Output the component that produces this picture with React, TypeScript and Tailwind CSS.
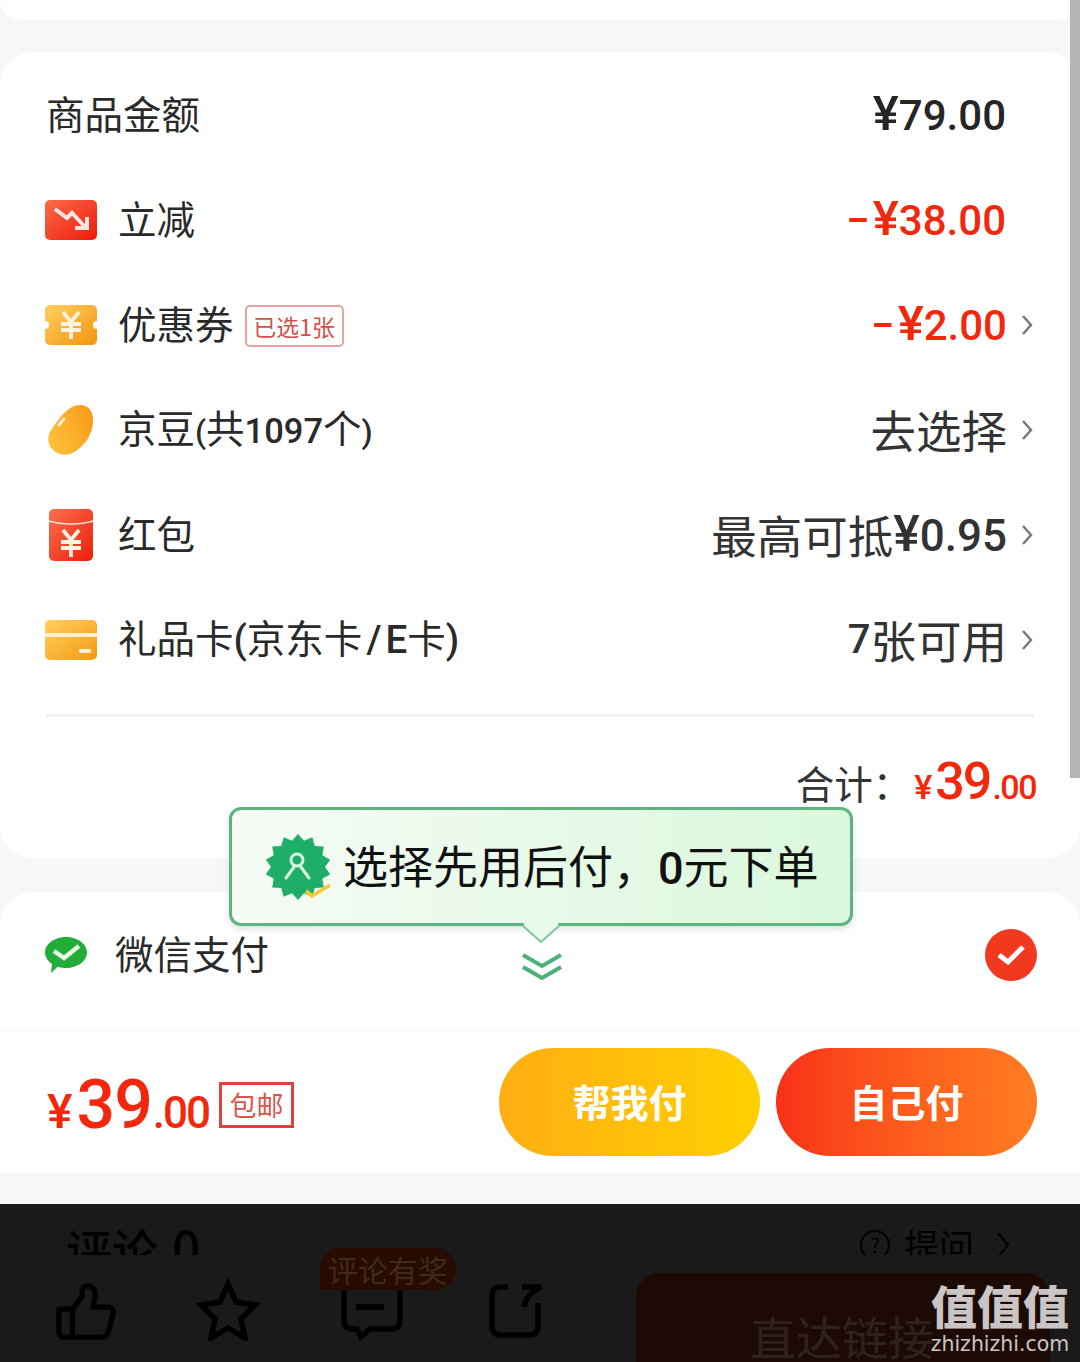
const cjk = { fontFamily: '"Noto Sans CJK SC", sans-serif' };

const starPoints = Array.from({ length: 28 }, (_, i) => {
  const r = i % 2 === 0 ? 33 : 27;
  const a = (i * Math.PI) / 14 - Math.PI / 2;
  return `${(33 + r * Math.cos(a)).toFixed(1)},${(33 + r * Math.sin(a)).toFixed(1)}`;
}).join(' ');

const Chevron = () => (
  <svg width="12" height="24" viewBox="0 0 12 24" fill="none" stroke="#777" strokeWidth="2.4" className="ml-[14px]">
    <path d="M2 3l8 9-8 9" />
  </svg>
);

const DropIcon = () => (
  <svg width="52" height="40" viewBox="0 0 52 40">
    <defs>
      <linearGradient id="drop" x1="0" y1="0" x2="1" y2="1">
        <stop offset="0" stopColor="#fb6a4a" />
        <stop offset="1" stopColor="#ee1c0a" />
      </linearGradient>
    </defs>
    <rect width="52" height="40" rx="5" fill="url(#drop)" />
    <path d="M10 9l12 9 5-5 14 15" fill="none" stroke="#fde6df" strokeWidth="4" />
    <path d="M30 28h12V17" fill="none" stroke="#fde6df" strokeWidth="4" />
  </svg>
);

const Yen = ({ x, y, c = '#fff3df' }: { x: number; y: number; c?: string }) => (
  <path
    d={`M${x - 8} ${y - 12}l8 10 8-10M${x - 10} ${y}h20M${x - 10} ${y + 6}h20M${x} ${y - 2}v17`}
    fill="none"
    stroke={c}
    strokeWidth="3.8"
  />
);

const CouponIcon = () => (
  <svg width="52" height="40" viewBox="0 0 52 40">
    <defs>
      <linearGradient id="coupon" x1="0" y1="0" x2="1" y2="1">
        <stop offset="0" stopColor="#ffd061" />
        <stop offset="1" stopColor="#f29310" />
      </linearGradient>
    </defs>
    <path
      d="M5 0h42a5 5 0 0 1 5 5v11a4 4 0 0 0 0 8v11a5 5 0 0 1-5 5H5a5 5 0 0 1-5-5V24a4 4 0 0 0 0-8V5a5 5 0 0 1 5-5z"
      fill="url(#coupon)"
    />
    <Yen x={26} y={19} />
  </svg>
);

const BeanIcon = () => (
  <svg width="48" height="52" viewBox="0 0 48 52">
    <defs>
      <linearGradient id="bean" x1="0" y1="0.8" x2="1" y2="0.2">
        <stop offset="0" stopColor="#ffc23a" />
        <stop offset="1" stopColor="#f79c1a" />
      </linearGradient>
    </defs>
    <path
      d="M33 1c9 0 14 7 13 18-1 12-8 22-17 28-7 5-17 5-23-1C0 40 0 32 4 26 10 18 20 1 33 1z"
      fill="url(#bean)"
    />
    <path d="M12 21l5-6" stroke="#fff2d6" strokeWidth="3" strokeLinecap="round" />
  </svg>
);

const PacketIcon = () => (
  <svg width="44" height="52" viewBox="0 0 44 52">
    <defs>
      <linearGradient id="packet" x1="0" y1="0" x2="1" y2="1">
        <stop offset="0" stopColor="#fb6f4f" />
        <stop offset="1" stopColor="#ee1f0b" />
      </linearGradient>
    </defs>
    <rect width="44" height="52" rx="5" fill="url(#packet)" />
    <path d="M0 12c12 4 32 4 44 0" fill="none" stroke="#fde2d8" strokeWidth="1.6" />
    <Yen x={22} y={33} />
  </svg>
);

const CardIcon = () => (
  <svg width="52" height="40" viewBox="0 0 52 40">
    <defs>
      <linearGradient id="card" x1="0" y1="0" x2="1" y2="1">
        <stop offset="0" stopColor="#ffcf5c" />
        <stop offset="1" stopColor="#f39a12" />
      </linearGradient>
    </defs>
    <rect width="52" height="40" rx="5" fill="url(#card)" />
    <rect y="13" width="52" height="4" fill="#fff1cf" />
    <rect x="34" y="29" width="12" height="4" rx="1" fill="#fff1cf" />
  </svg>
);

const BadgeIcon = () => (
  <svg width="68" height="66" viewBox="0 0 68 66">
    <polygon points={starPoints} fill="#1fae68" />
    <circle cx="32" cy="26" r="6" fill="none" stroke="#d8f6e3" strokeWidth="3" />
    <path d="M29 33l-8 11M36 33l8 11" fill="none" stroke="#d8f6e3" strokeWidth="3" strokeLinecap="round" />
    <path d="M41 57l6 5 18-11" fill="none" stroke="#f3c93a" strokeWidth="3.6" />
  </svg>
);

const WeChatIcon = () => (
  <svg width="42" height="36" viewBox="0 0 42 36">
    <path
      d="M21 0c11.600 0 21 7 21 15.500S32.600 31 21 31c-3 0-5.800-.4-8.300-1.200L6 36l1-9C2.700 24 0 20 0 15.500 0 7 9.400 0 21 0z"
      fill="#22ac38"
    />
    <path d="M9 14l10 7 15-12" fill="none" stroke="#e8f9e6" strokeWidth="4.400" />
  </svg>
);

const Row = ({ icon, left, right }: { icon: React.ReactNode; left: React.ReactNode; right: React.ReactNode }) => (
  <div className="flex h-[105px] items-center justify-between pl-[45px] pr-[47px]">
    <div className="flex items-center">
      <div className="flex w-[52px] justify-center">{icon}</div>
      <div className="ml-[21px] flex items-center pb-[3px] text-[38.500px] text-[#2a2a2a]">{left}</div>
    </div>
    {right}
  </div>
);

// digits in the reference are heavier than the CJK around them
const Num = ({ children, className = '' }: { children: React.ReactNode; className?: string }) => (
  <span className={`font-['Roboto'] font-medium ${className}`}>{children}</span>
);

const Price = ({ value }: { value: string }) => (
  <span className="pb-[2px] font-['Roboto'] text-[42px] font-medium text-[#f2270c]">
    <span className="mr-[3px]">−</span>
    <span className="text-[49px]">¥</span>
    {value}
  </span>
);

export default function App() {
  return (
    <div className="relative h-[1362px] w-[1080px] overflow-hidden bg-[#f7f7f7]" style={cjk}>
      <div className="h-5 rounded-b-[24px] bg-white" />

      <div className="mt-8 h-[806px] rounded-[32px] bg-white pt-[10px]">
        <div className="flex h-[105px] items-center justify-between pl-[46px] pr-[74px]">
          <span className="pb-[3px] text-[38.500px] text-[#2a2a2a]">商品金额</span>
          <span className="pb-[2px] font-['Roboto'] text-[42px] font-medium text-[#262626]">
            <span className="text-[49px]">¥</span>79.00
          </span>
        </div>
        <Row
          icon={<DropIcon />}
          left="立减"
          right={
            <div className="mr-[27px] flex">
              <Price value="38.00" />
            </div>
          }
        />
        <Row
          icon={<CouponIcon />}
          left={
            <>
              优惠券
              <span className="ml-[11px] mt-[6px] flex h-[42px] w-[99px] items-center justify-center rounded-[5px] border-2 border-[#e6a3a0] text-[23px] text-[#d5504a]">
                已选1张
              </span>
            </>
          }
          right={
            <div className="flex items-center">
              <Price value="2.00" />
              <Chevron />
            </div>
          }
        />
        <Row
          icon={<BeanIcon />}
          left={
            <span>
              京豆<Num className="text-[32px]">(</Num>共<Num className="text-[34.500px]">1097</Num>个
              <Num className="text-[32px]">)</Num>
            </span>
          }
          right={
            <div className="flex items-center text-[45.500px] text-[#333]">
              去选择
              <Chevron />
            </div>
          }
        />
        <Row
          icon={<PacketIcon />}
          left="红包"
          right={
            <div className="flex items-center text-[45.500px] text-[#333]">
              最高可抵
              <Num className="text-[44px]">
                <span className="text-[50px]">¥</span>0.95
              </Num>
              <Chevron />
            </div>
          }
        />
        <Row
          icon={<CardIcon />}
          left={
            <span>
              礼品卡<Num>(</Num>京东卡<Num className="mx-[4px]">/</Num>
              <Num>E</Num>卡<Num>)</Num>
            </span>
          }
          right={
            <div className="flex items-center text-[45.500px] text-[#333]">
              <Num className="text-[40px]">7</Num>张可用
              <Chevron />
            </div>
          }
        />
        <div className="mx-[46px] mt-[22px] h-[3px] bg-[#f1f1f1]" />
        <div className="mr-[44px] mt-[26px] flex items-baseline justify-end">
          <span className="text-[38.500px] text-[#333]">合计{'\uFF1A'}</span>
          <span className="ml-[3px] font-['Roboto'] font-medium text-[#f2270c]">
            <span className="text-[34px]">¥</span>
            <span className="ml-[3px] text-[52px] tracking-[-2px]">39</span>
            <span className="ml-[2px] text-[34px] tracking-[-1.500px]">.00</span>
          </span>
        </div>
      </div>

      <div className="mt-[34px] flex h-[138px] items-start justify-between rounded-t-[32px] bg-white pl-[45px] pr-[43px] pt-[37px]">
        <div className="flex h-[52px] items-center">
          <WeChatIcon />
          <span className="ml-[28px] pb-[6px] text-[38.500px] leading-[40px] text-[#2a2a2a]">微信支付</span>
        </div>
        <div className="flex h-[52px] w-[52px] items-center justify-center rounded-full bg-[#f0391f]">
          <svg width="30" height="24" viewBox="0 0 30 24" fill="none" stroke="#fff" strokeWidth="5">
            <path d="M3 12l9 7L27 4" />
          </svg>
        </div>
      </div>

      <div className="flex h-[143px] items-start justify-between border-t-2 border-[#fafafa] bg-white pl-[47px] pr-[43px] pt-[16px]">
        <div className="mt-[6px] flex items-center">
          <span className="font-['Roboto'] font-medium text-[#f2270c]">
            <span className="text-[48px]">¥</span>
            <span className="ml-[4px] text-[68px] tracking-[-1px]">39</span>
            <span className="ml-[1px] text-[44px] tracking-[-2px]">.00</span>
          </span>
          <span className="ml-[10px] flex h-[46px] w-[75px] items-center justify-center border-[3px] border-[#d9453a] text-[27px] text-[#d9554b]">
            包邮
          </span>
        </div>
        <div className="flex gap-4">
          <div className="flex h-[108px] w-[261px] items-center justify-center rounded-full bg-gradient-to-r from-[#ffae12] to-[#ffd000] pb-[3px] text-[38px] font-bold text-white">
            帮我付
          </div>
          <div className="flex h-[108px] w-[261px] items-center justify-center rounded-full bg-gradient-to-r from-[#f92f17] to-[#ff7d22] pb-[3px] text-[38px] font-bold text-white">
            自己付
          </div>
        </div>
      </div>

      <div className="mt-[31px] h-[158px] bg-[#1a1a1a]">
        <div className="flex h-[51px] items-start justify-between overflow-hidden pl-[66px] pr-[70px] pt-[12px]">
          <span className="text-[46px] font-medium leading-[60px] text-black">
            评论<span className="ml-[14px] text-[50px]">0</span>
          </span>
          <div className="flex items-center pt-[4px] text-[35px] leading-[50px] text-black">
            <span className="flex h-[30px] w-[30px] items-center justify-center rounded-full border-2 border-black text-[20px] leading-none">
              ?
            </span>
            <span className="ml-[14px]">提问</span>
            <svg width="14" height="28" viewBox="0 0 14 28" fill="none" stroke="#000" strokeWidth="2" className="ml-[22px]">
              <path d="M2 2l10 12-10 12" />
            </svg>
          </div>
        </div>

        <div className="flex items-start pl-[56px] pt-[18px]">
          <svg width="60" height="60" viewBox="0 0 62 60" fill="none" stroke="#000" strokeWidth="5.500" strokeLinejoin="round" className="mt-[9px]">
            <path d="M3 27h14v29H8a5 5 0 0 1-5-5zM17 27l10-13V8c0-7 12-7 13 1 1 5-1 12-2 16h16c4 0 6 3 5 7l-5 19c-1 3-3 5-6 5H17" />
          </svg>
          <svg width="64" height="62" viewBox="0 0 64 62" fill="none" stroke="#000" strokeWidth="5.500" className="ml-[80px] mt-[6px]">
            <path d="M32 5l8 18 19 3-14 14 4 19-17-10-17 10 4-19L5 26l19-3z" />
          </svg>
          <svg width="62" height="54" viewBox="0 0 62 54" fill="none" stroke="#000" strokeWidth="5.500" className="ml-[81px] mt-[14px]">
            <path d="M3 3v31c0 5 3 8 8 8h5l4 8 9-8h22c5 0 8-3 8-8V3" />
            <path d="M15 20h28" strokeWidth="6" />
          </svg>
          <svg width="60" height="56" viewBox="0 0 58 56" fill="none" stroke="#000" strokeWidth="5.500" className="ml-[84px] mt-[10px]">
            <path d="M20 4H13C7 4 4 7 4 13v30c0 6 3 9 9 9h28c6 0 9-3 9-9V20" />
            <path d="M34 4h19C44 8 38 14 36 24" />
          </svg>
          <div className="ml-[89px] flex h-[200px] w-[414px] justify-center rounded-[24px] bg-[#1e0a05] pr-[2px] pt-[32px] text-[46px] leading-[60px] text-[#2e221d]">
            直达链接
          </div>
        </div>
      </div>

      <div className="absolute left-[320px] top-[1248px] flex h-[42px] w-[136px] items-center justify-center rounded-t-[21px] rounded-br-[21px] bg-[#2a0b00] text-[30px] text-[#3d2a20]">
        评论有奖
      </div>

      <div className="absolute left-[229px] top-[807px]">
        <div className="flex h-[119px] w-[624px] items-center rounded-[12px] border-[3px] border-[#5cb57f] bg-gradient-to-r from-[#f6fbf6] to-[#d9f8dc] pl-[33px] shadow-[0_3px_6px_rgba(0,0,0,0.12)]">
          <BadgeIcon />
          <span className="ml-[10px] text-[45px] leading-none text-[#111]">
            选择先用后付{'\uFF0C'}
            <Num>0</Num>元下单
          </span>
        </div>
        <svg width="40" height="21" viewBox="0 0 40 21" className="absolute left-[292px] top-[116px]">
          <path d="M1 2L20 19 39 2" fill="#e9f9ea" stroke="#7cc79b" strokeWidth="2" />
          <path d="M3 0h34v3H3z" fill="#e9f9ea" />
        </svg>
        <svg width="40" height="28" viewBox="0 0 40 28" fill="none" stroke="#4cb27a" strokeWidth="4" className="absolute left-[293px] top-[145px]">
          <path d="M1 3l19 11L39 3M1 15l19 11 19-11" />
        </svg>
      </div>

      <div className="absolute right-0 top-0 h-[778px] w-[10px] bg-[#b5b5b5]" />

      <div className="absolute left-[930px] top-[1276px] w-[140px] text-center text-[#c9c5c5]">
        <div className="text-[46px] font-black leading-[56px]">值值值</div>
        <div className="font-['DejaVu_Sans'] text-[20.500px] leading-[24px]">zhizhizhi.com</div>
      </div>
    </div>
  );
}
